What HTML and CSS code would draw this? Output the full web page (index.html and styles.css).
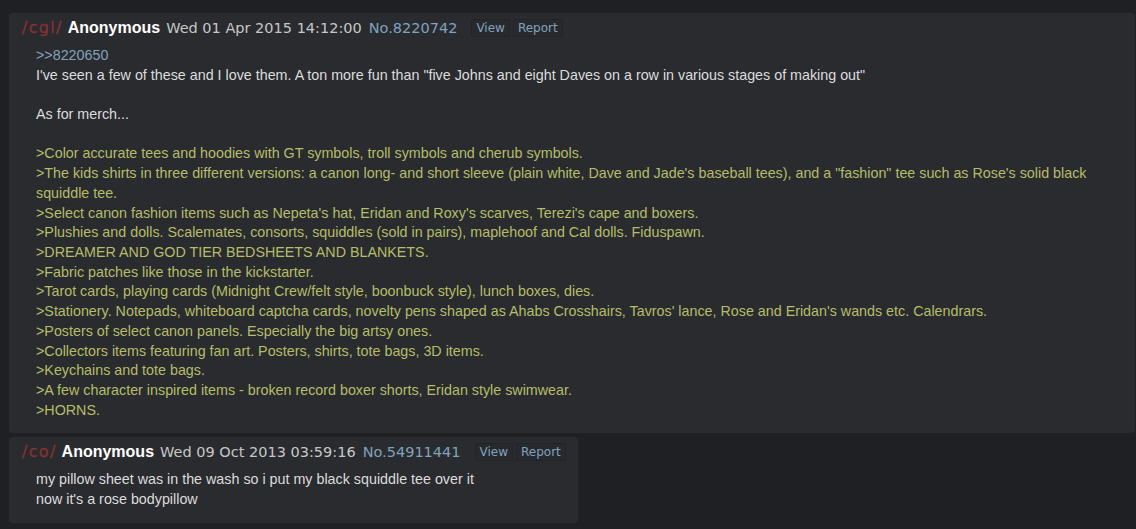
FILE: index.html
```html
<!DOCTYPE html>
<html>
<head>
<meta charset="utf-8">
<link rel="stylesheet" href="styles.css">
</head>
<body>
<div class="thread">
  <article class="post">
    <header class="post-head">
      <span class="board">/cgl/</span>
      <span class="name">Anonymous</span>
      <span class="date">Wed 01 Apr 2015 14:12:00</span>
      <span class="num">No.8220742</span>
      <span class="actions"><span class="btn">View</span><span class="btn">Report</span></span>
    </header>
    <div class="post-body">
      <div class="quotelink">&gt;&gt;8220650</div>
      <div>I've seen a few of these and I love them. A ton more fun than "five Johns and eight Daves on a row in various stages of making out"</div>
      <div class="blank"></div>
      <div>As for merch...</div>
      <div class="blank"></div>
      <div class="green">&gt;Color accurate tees and hoodies with GT symbols, troll symbols and cherub symbols.</div>
      <div class="green">&gt;The kids shirts in three different versions: a canon long- and short sleeve (plain white, Dave and Jade's baseball tees), and a "fashion" tee such as Rose's solid black squiddle tee.</div>
      <div class="green">&gt;Select canon fashion items such as Nepeta's hat, Eridan and Roxy's scarves, Terezi's cape and boxers.</div>
      <div class="green">&gt;Plushies and dolls. Scalemates, consorts, squiddles (sold in pairs), maplehoof and Cal dolls. Fiduspawn.</div>
      <div class="green">&gt;DREAMER AND GOD TIER BEDSHEETS AND BLANKETS.</div>
      <div class="green">&gt;Fabric patches like those in the kickstarter.</div>
      <div class="green">&gt;Tarot cards, playing cards (Midnight Crew/felt style, boonbuck style), lunch boxes, dies.</div>
      <div class="green">&gt;Stationery. Notepads, whiteboard captcha cards, novelty pens shaped as Ahabs Crosshairs, Tavros' lance, Rose and Eridan's wands etc. Calendrars.</div>
      <div class="green">&gt;Posters of select canon panels. Especially the big artsy ones.</div>
      <div class="green">&gt;Collectors items featuring fan art. Posters, shirts, tote bags, 3D items.</div>
      <div class="green">&gt;Keychains and tote bags.</div>
      <div class="green">&gt;A few character inspired items - broken record boxer shorts, Eridan style swimwear.</div>
      <div class="green">&gt;HORNS.</div>
    </div>
  </article>
  <article class="post">
    <header class="post-head">
      <span class="board">/co/</span>
      <span class="name">Anonymous</span>
      <span class="date">Wed 09 Oct 2013 03:59:16</span>
      <span class="num">No.54911441</span>
      <span class="actions"><span class="btn">View</span><span class="btn">Report</span></span>
    </header>
    <div class="post-body">
      <div>my pillow sheet was in the wash so i put my black squiddle tee over it</div>
      <div>now it's a rose bodypillow</div>
    </div>
  </article>
</div>
</body>
</html>
```
FILE: styles.css
```css
html, body {
  margin: 0;
  padding: 0;
  background: #1f2023;
}
body {
  font-family: "Liberation Sans", Arial, sans-serif;
  color: #c5c8c6;
}
.thread {
  display: flex;
  flex-direction: column;
  align-items: flex-start;
  gap: 4px;
  padding: 13px 1px 0 9px;
}
.post {
  background: #2a2b2f;
  border-radius: 4px;
  padding: 4px 12px 13px 13px;
  box-sizing: border-box;
  max-width: 100%;
}
.post-head {
  display: flex;
  align-items: baseline;
  height: 21px;
  line-height: 21px;
  white-space: nowrap;
  font-family: "DejaVu Sans", Verdana, sans-serif;
  font-size: 14.5px;
  color: #c5c8c6;
}
.board {
  font-size: 16px;
  letter-spacing: 1.3px;
  font-weight: 500;
  color: #853232;
  margin-right: 5px;
  -webkit-text-stroke: 0.3px #853232;
}
.name {
  font-family: "Liberation Sans", Arial, sans-serif;
  font-weight: bold;
  font-size: 16px;
  color: #ffffff;
  margin-right: 6px;
}
.date {
  margin-right: 7px;
}
.num {
  color: #81a2be;
}
.actions {
  display: flex;
  gap: 3px;
  margin-left: 14px;
  align-self: center;
}
.btn {
  font-size: 12px;
  line-height: 16px;
  padding: 0 4px;
  color: #81a2be;
  background: #28292d;
  border: 1px solid #232427;
  border-radius: 2px;
}
.post-body {
  margin: 8px 0 0 14px;
  font-size: 14.3px;
  line-height: 19.7px;
  color: #dcdcdc;
}
.blank {
  height: 19.7px;
}
.quotelink {
  color: #81a2be;
}
.green {
  color: #b5bd68;
}
```
